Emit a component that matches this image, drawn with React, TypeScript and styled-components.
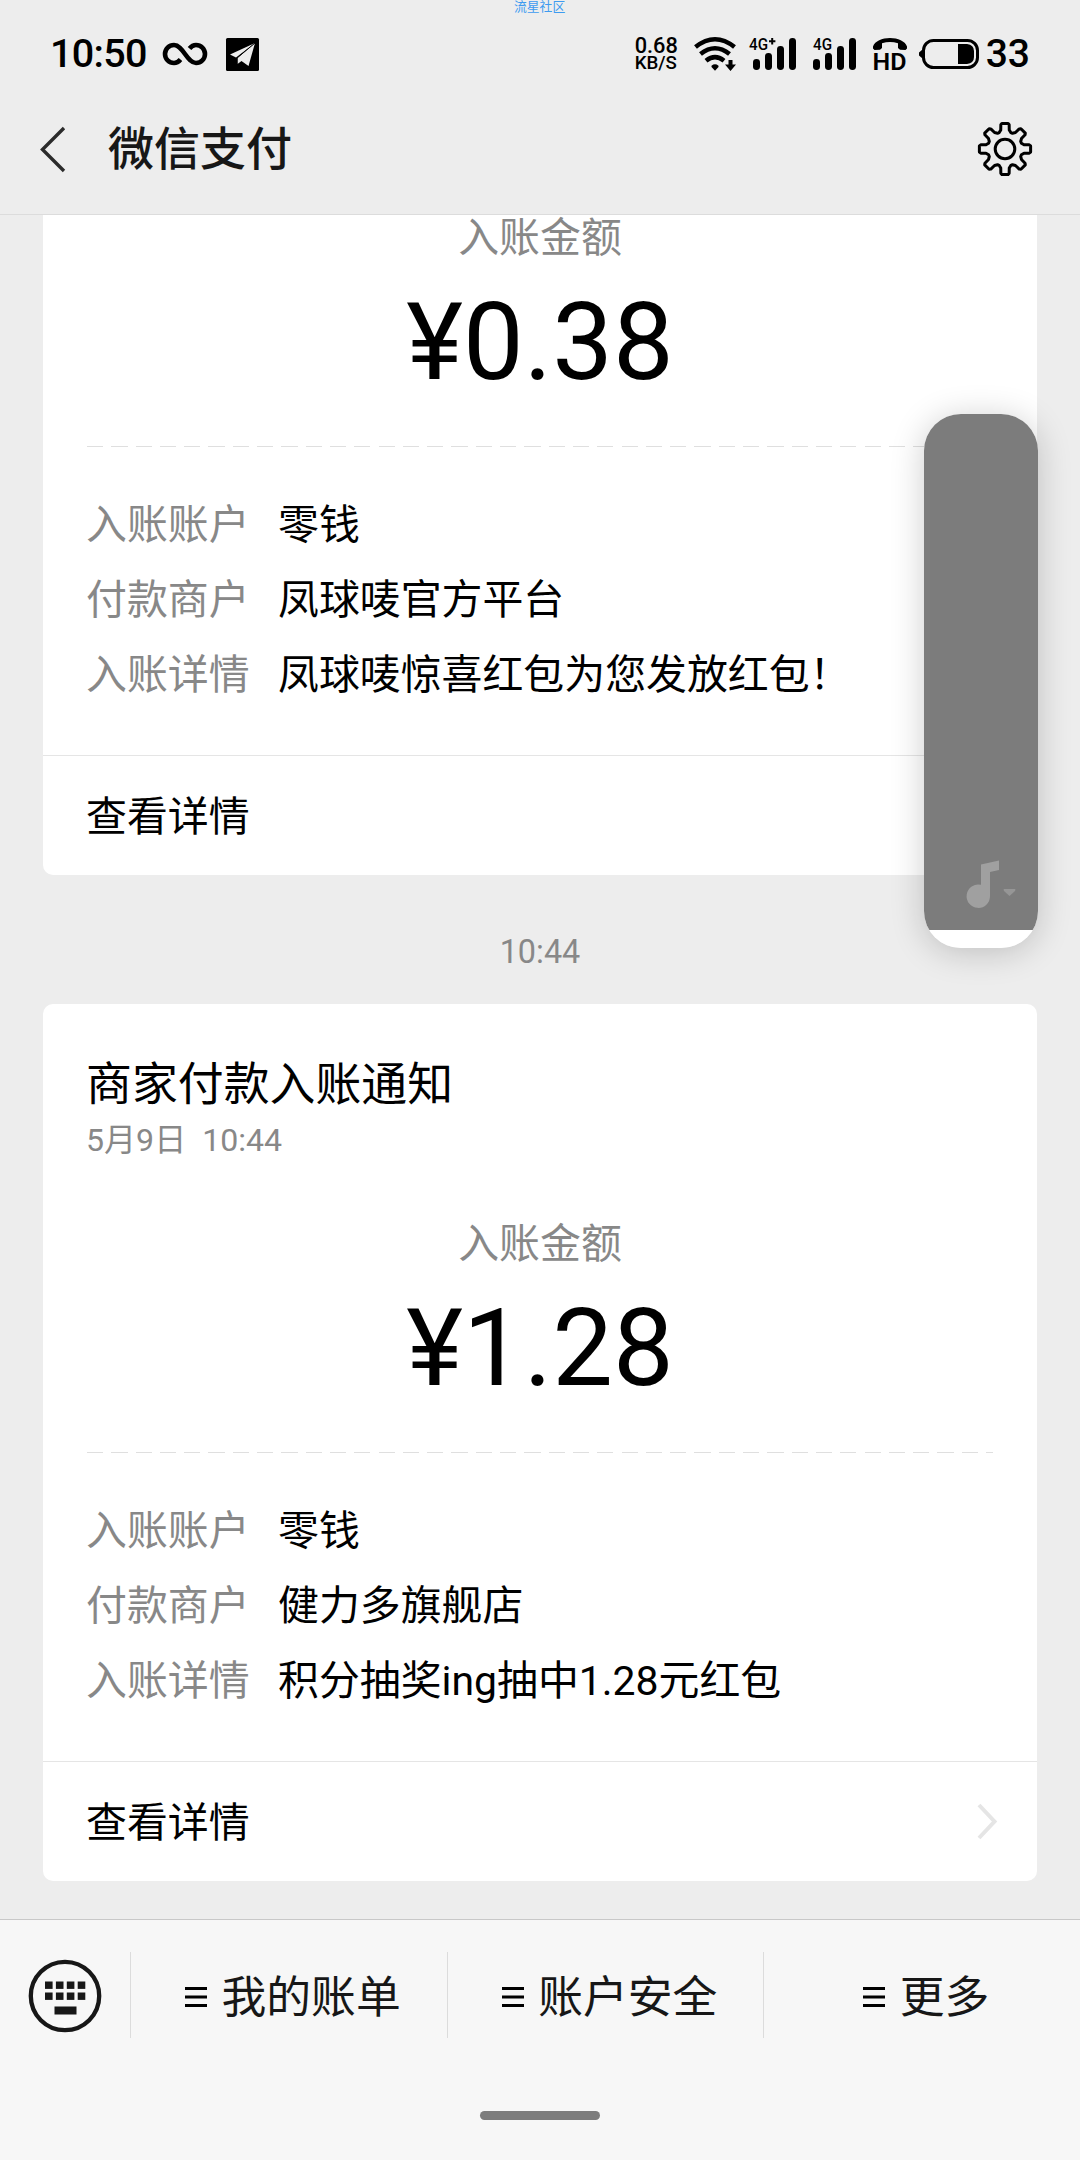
import React from "react";
import styled, { createGlobalStyle, css } from "styled-components";

const GlobalStyle = createGlobalStyle`
  * { box-sizing: border-box; }
  body {
    margin: 0;
    background: #ededed;
    font-family: Roboto, "Noto Sans CJK SC", sans-serif;
    color: #000;
  }
`;

const Screen = styled.div`
  position: relative;
  width: 1080px;
  height: 2160px;
  display: flex;
  flex-direction: column;
  overflow: hidden;
  background: #ededed;
`;

const Watermark = styled.div`
  position: absolute;
  top: 0;
  left: 514px;
  font-size: 12.8px;
  line-height: 13px;
  color: #3d9bf0;
`;

const Header = styled.header`
  flex: none;
  height: 215px;
  border-bottom: 1px solid #dcdcdc;
`;

const StatusBar = styled.div`
  height: 108px;
  padding: 0 50px 0 50px;
  display: flex;
  align-items: center;
  justify-content: space-between;
  font-weight: 500;
`;

const StatusGroup = styled.div`
  display: flex;
  align-items: center;
`;

const Clock = styled.span`
  width: 113px;
  font-size: 39.5px;
  line-height: 40px;
  letter-spacing: -0.7px;
`;

const Speed = styled.div`
  display: flex;
  flex-direction: column;
  width: 59px;
  padding-top: 1px;
`;

const SpeedValue = styled.span`
  font-size: 21.8px;
  line-height: 17px;
`;

const SpeedUnit = styled.span`
  font-size: 18.7px;
  line-height: 18px;
`;

const Battery = styled.span`
  margin-left: 7px;
  font-size: 39px;
  line-height: 40px;
`;

const TitleBar = styled.div`
  height: 82px;
  padding: 0 47px 0 39px;
  display: flex;
  align-items: center;
`;

const Title = styled.h1`
  margin: 0 auto 0 43px;
  font-size: 46px;
  line-height: 60px;
  font-weight: 500;
  color: #171717;
`;

const Feed = styled.main`
  flex: 1;
  min-height: 0;
  padding: 0 43px 38px;
  display: flex;
  flex-direction: column;
  justify-content: flex-end;
  overflow: hidden;
`;

const Card = styled.article<{ $continued?: boolean }>`
  flex: none;
  height: ${(p) => (p.$continued ? 660 : 877)}px;
  border-radius: ${(p) => (p.$continued ? "0 0 10px 10px" : "10px")};
  background: #fff;
  display: flex;
  flex-direction: column;
`;

const CardBody = styled.div`
  flex: 1;
  padding: 0 43px 0 43px;
  display: flex;
  flex-direction: column;
`;

const CardHeading = styled.div`
  height: 217px;
  padding-top: 50px;
`;

const CardTitle = styled.h2`
  margin: 0;
  font-size: 45.9px;
  line-height: 60px;
  font-weight: 400;
`;

const CardDate = styled.div`
  font-size: 32.1px;
  line-height: 53px;
  color: #888;
  white-space: pre;
`;

const AmountLabel = styled.div`
  font-size: 40.9px;
  line-height: 46px;
  text-align: center;
  color: #888;
`;

const Amount = styled.div`
  margin-top: 11px;
  font-size: 108px;
  line-height: 140px;
  height: 140px;
  text-align: center;
`;

const Dashes = styled.div`
  flex: none;
  height: 1px;
  margin: 34px 1px 0 1px;
  background: repeating-linear-gradient(90deg, #dfdfdf 0 16.2px, transparent 16.2px 24.3px);
`;

const Details = styled.dl`
  margin: 41px 0 0;
  display: grid;
  grid-template-columns: 192px 1fr;
  grid-auto-rows: 75px;
  font-size: 40.9px;
  line-height: 75px;
`;

const Term = styled.dt`
  color: #888;
`;

const Value = styled.dd`
  margin: 0;
  white-space: nowrap;
`;

const CardFooter = styled.div`
  height: 120px;
  border-top: 1px solid #e5e5e5;
  padding: 0 40px 0 43px;
  display: flex;
  align-items: center;
  justify-content: space-between;
  font-size: 40.9px;
`;

const FooterLabel = styled.span`
  padding-bottom: 4px;
`;

const TimeMark = styled.div`
  flex: none;
  height: 129px;
  line-height: 155px;
  font-size: 32.4px;
  text-align: center;
  color: #888;
`;

const VolumePanel = styled.aside`
  position: absolute;
  left: 924px;
  top: 414px;
  width: 114px;
  height: 534px;
  border-radius: 37px;
  overflow: hidden;
  display: flex;
  flex-direction: column;
  background: #fff;
`;

const VolumeShadow = styled.div`
  position: absolute;
  left: 924px;
  top: 414px;
  width: 114px;
  height: 534px;
  border-radius: 37px;
  box-shadow: 0 4px 34px rgba(0, 0, 0, 0.2);
`;

const VolumeTrack = styled.div`
  height: 516px;
  background: #7c7c7c;
  display: flex;
  align-items: flex-end;
  padding: 0 0 22px 42px;
`;

const BottomBar = styled.footer`
  flex: none;
  height: 241px;
  border-top: 1px solid #c8c8c8;
  background: #f7f7f7;
  display: flex;
  flex-direction: column;
  align-items: center;
`;

const MenuRow = styled.nav`
  width: 100%;
  height: 152px;
  padding-top: 32px;
  display: flex;
  align-items: flex-start;
`;

const cell = css`
  height: 86px;
  display: flex;
  align-items: center;
  justify-content: center;
`;

const KeyboardButton = styled.div`
  ${cell}
  width: 130px;
  padding: 1px 0 0;
`;

const MenuItem = styled.div`
  ${cell}
  flex: 1;
  gap: 14.5px;
  border-left: 1px solid #dcdcdc;
  padding: 3px 0 0 8px;
  color: #171717;
`;

const MenuLabel = styled.span`
  padding-top: 3px;
  font-size: 44.8px;
  line-height: 70px;
`;

const HomeIndicator = styled.div`
  margin-top: 39px;
  width: 120px;
  height: 9px;
  border-radius: 5px;
  background: #7d7d7d;
`;

const Icon = styled.svg<{ $left?: number }>`
  display: block;
  flex: none;
  overflow: visible;
  margin-left: ${(p) => p.$left ?? 0}px;
`;

const gearPath = (() => {
  const points: [number, number][] = [];
  for (let i = 0; i < 8; i++) {
    const base = (i * Math.PI) / 4;
    for (const [r, a] of [[17.4, -0.34], [19.5, -0.22], [24.6, -0.17], [25.8, -0.12], [25.8, 0.12], [24.6, 0.17], [19.5, 0.22], [17.4, 0.34]]) {
      points.push([28 + r * Math.sin(base + a), 28 - r * Math.cos(base + a)]);
    }
  }
  return "M" + points.map(([x, y]) => `${x.toFixed(2)} ${y.toFixed(2)}`).join("L") + "Z";
})();

const Signal = ({ plus, offset, left }: { plus?: boolean; offset: number; left: number }) => (
  <Icon $left={left} width={offset + 43} height="34" viewBox={`0 0 ${offset + 43} 34`}>
    <text x="0" y="13" fontSize="16.5" fontWeight="500" fontFamily="Roboto, sans-serif" textLength="19" lengthAdjust="spacingAndGlyphs">
      4G
    </text>
    {plus && <path d="M20 4.2H26.4M23.2 1V7.4" stroke="#000" strokeWidth="2" />}
    {[[0, 22], [12, 16], [24, 9], [36, 1]].map(([x, y]) => (
      <rect key={x} x={offset + x} y={y} width="7" height={33 - y} rx="3.4" />
    ))}
  </Icon>
);

type PaymentProps = {
  title?: string;
  date?: string;
  amount: string;
  merchant: string;
  detail: string;
};

const PaymentCard = ({ title, date, amount, merchant, detail }: PaymentProps) => (
  <Card $continued={!title}>
    <CardBody>
      {title && (
        <CardHeading>
          <CardTitle>{title}</CardTitle>
          <CardDate>{date}</CardDate>
        </CardHeading>
      )}
      <AmountLabel>入账金额</AmountLabel>
      <Amount>¥{amount}</Amount>
      <Dashes />
      <Details>
        <Term>入账账户</Term>
        <Value>零钱</Value>
        <Term>付款商户</Term>
        <Value>{merchant}</Value>
        <Term>入账详情</Term>
        <Value>{detail}</Value>
      </Details>
    </CardBody>
    <CardFooter>
      <FooterLabel>查看详情</FooterLabel>
      <Icon width="20" height="37" viewBox="0 0 20 37" fill="none" stroke="#e5e5e5" strokeWidth="4">
        <path d="M2 2L17.5 18.5L2 35" />
      </Icon>
    </CardFooter>
  </Card>
);

export default function App() {
  return (
    <Screen>
      <GlobalStyle />
      <Header>
        <StatusBar>
          <StatusGroup>
            <Clock>10:50</Clock>
            <Icon width="44" height="24" viewBox="0 0 44 24" fill="none" stroke="#000" strokeWidth="4.6">
              <path d="M17.5 17.5C15.5 20 13.5 21 11 21A9 9 0 0 1 11 3C20 3 24 21 33 21A9 9 0 0 0 33 3C30.5 3 28.5 4 26.5 6.5" />
            </Icon>
            <Icon $left={19} width="33" height="33" viewBox="0 0 33 33">
              <rect width="33" height="33" rx="1.5" />
              <path d="M29 5L4 16.5L10 19.5ZM29 5L11.5 20V26L15.5 23L22.5 28Z" fill="#ededed" />
              <path d="M29 5L11 20V26" fill="none" stroke="#000" strokeWidth="1" />
            </Icon>
          </StatusGroup>
          <StatusGroup>
            <Speed>
              <SpeedValue>0.68</SpeedValue>
              <SpeedUnit>KB/S</SpeedUnit>
            </Speed>
            <Icon width="42" height="34" viewBox="0 0 42 34" fill="none" stroke="#000" strokeWidth="4.6">
              <path d="M1.5 10Q21 -5.5 40.5 10M6.5 17Q21 5.5 35.5 17M12 23.7Q21 16.5 30 23.7" />
              <path d="M17.5 28.7Q21 26 24.5 28.7V30L21 33.7L17.5 30Z" fill="#000" stroke="none" />
              <path d="M34.5 23H38.5V27.5H42L36.5 34L31 27.5H34.5Z" fill="#000" stroke="none" />
            </Icon>
            <Signal left={13} plus offset={4} />
            <Signal left={17} offset={0} />
            <Icon $left={17} width="34" height="33" viewBox="0 0 34 33">
              <path d="M0 8.5C2 3 9 0 17 0S32 3 34 8.5V10.5L32.5 12L27 11.8L25 10V5.2Q17 2.6 9 5.2V10L7 11.8L1.5 12L0 10.5Z" />
              <text x="-0.5" y="32" fontSize="24.5" fontWeight="600" textLength="34" lengthAdjust="spacingAndGlyphs" fontFamily="Roboto, sans-serif">
                HD
              </text>
            </Icon>
            <Icon $left={12} width="60" height="30" viewBox="0 0 60 30">
              <rect x="4.5" y="1.5" width="54" height="27" rx="10" fill="none" stroke="#000" strokeWidth="3" />
              <path d="M3.5 10.5L0 13.5V16.5L3.5 19.5ZM39 5H48Q55 6 55 12V18Q55 24 48 25H39Z" />
            </Icon>
            <Battery>33</Battery>
          </StatusGroup>
        </StatusBar>
        <TitleBar>
          <Icon width="26" height="45" viewBox="0 0 26 45" fill="none" stroke="#2b2b2b" strokeWidth="3.4">
            <path d="M25 1L3.5 22.5L25 44" />
          </Icon>
          <Title>微信支付</Title>
          <Icon width="56" height="56" viewBox="0 0 56 56" fill="none" stroke="#000" strokeWidth="3" strokeLinejoin="round">
            <path d={gearPath} />
            <circle cx="28" cy="28" r="9.8" />
          </Icon>
        </TitleBar>
      </Header>

      <Feed>
        <PaymentCard amount="0.38" merchant="凤球唛官方平台" detail="凤球唛惊喜红包为您发放红包！" />
        <TimeMark>10:44</TimeMark>
        <PaymentCard
          title="商家付款入账通知"
          date="5月9日  10:44"
          amount="1.28"
          merchant="健力多旗舰店"
          detail="积分抽奖ing抽中1.28元红包"
        />
      </Feed>

      <BottomBar>
        <MenuRow>
          <KeyboardButton>
            <Icon width="74" height="74" viewBox="0 0 74 74" fill="#171717">
              <circle cx="37" cy="37" r="34.2" fill="none" stroke="#171717" strokeWidth="4.3" />
              {[0, 1, 2, 3].map((i) => (
                <React.Fragment key={i}>
                  <rect x={17 + i * 10.9} y="22.5" width="7.6" height="7.4" />
                  <rect x={17 + i * 10.9} y="33.5" width="7.6" height="7.4" />
                </React.Fragment>
              ))}
              <rect x="26.5" y="47.5" width="22" height="8" />
            </Icon>
          </KeyboardButton>
          {["我的账单", "账户安全", "更多"].map((label) => (
            <MenuItem key={label}>
              <Icon width="22" height="22" viewBox="0 0 22 22">
                <path d="M0 1H22V4H0ZM0 9.5H22V12.5H0ZM0 18H22V21H0Z" fill="#000" />
              </Icon>
              <MenuLabel>{label}</MenuLabel>
            </MenuItem>
          ))}
        </MenuRow>
        <HomeIndicator />
      </BottomBar>

      <VolumeShadow />
      <VolumePanel>
        <VolumeTrack>
          <Icon width="50" height="48" viewBox="0 0 50 48" fill="#a0a0a0">
            <path d="M15 4.5L33 0.5V10L24 12V36A11.7 11.7 0 1 1 15 24.8Z" />
            <path d="M38 29H49Q50 29.5 49 31L43.5 36L38 31Q37 29.5 38 29Z" fill="#969696" />
          </Icon>
        </VolumeTrack>
      </VolumePanel>
      <Watermark>流星社区</Watermark>
    </Screen>
  );
}
